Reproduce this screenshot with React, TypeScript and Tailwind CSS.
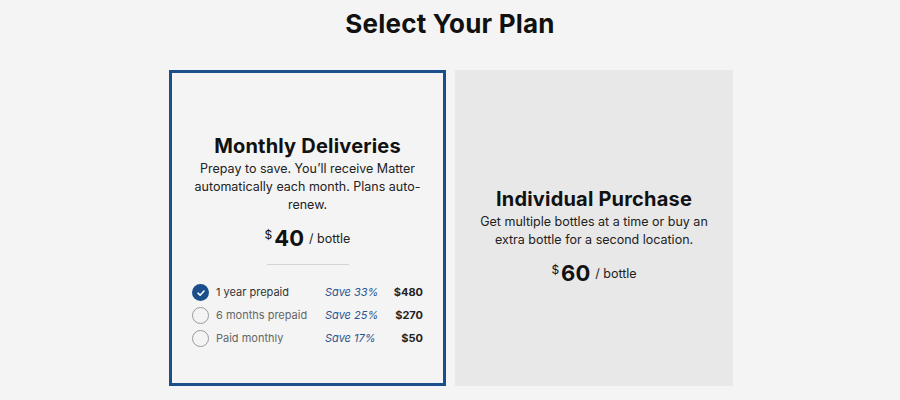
import React from "react";

const options = [
  { label: "1 year prepaid", save: "Save 33%", price: "$480", checked: true },
  { label: "6 months prepaid", save: "Save 25%", price: "$270", checked: false },
  { label: "Paid monthly", save: "Save 17%", price: "$50", checked: false },
];

function Radio({ checked }: { checked: boolean }) {
  if (checked) {
    return (
      <span className="flex h-[17px] w-[17px] shrink-0 items-center justify-center rounded-full bg-[#1b4f8c]">
        <svg width="10" height="10" viewBox="0 0 10 10" fill="none">
          <path d="M2 5.2 L4.1 7.2 L8 3" stroke="white" strokeWidth="1.6" strokeLinecap="round" strokeLinejoin="round" />
        </svg>
      </span>
    );
  }
  return <span className="h-[17px] w-[17px] shrink-0 rounded-full border border-[#9a9a9a] bg-[#f4f4f4]" />;
}

export default function App() {
  return (
    <div
      className="flex h-[400px] w-[900px] flex-col items-center bg-[#f4f4f4] text-[#111]"
      style={{ fontFamily: "Inter, 'Liberation Sans', sans-serif" }}
    >
      <h1 className="mt-[8px] text-[26px] font-bold leading-[32px] tracking-[0.2px]">Select Your Plan</h1>
      <div className="ml-[2px] mt-[30px] flex gap-[9px]">
        <div className="flex h-[316px] w-[277px] flex-col items-center justify-center border-[3px] border-[#1b4f8c] bg-[#f4f4f4] pt-[24px]">
          <h2 className="text-[20px] font-bold leading-[26px] tracking-[0.2px]">Monthly Deliveries</h2>
          <p className="mt-[1px] w-[240px] text-center text-[12.5px] leading-[18px] text-[#222]">
            Prepay to save. You’ll receive Matter automatically each month. Plans auto-renew.
          </p>
          <div className="mt-[12px] flex items-start">
            <span className="mt-[3px] text-[12px] leading-none">$</span>
            <span className="ml-[2px] text-[22px] font-bold leading-[24px]">40</span>
            <span className="ml-[5px] mt-[7px] text-[12.5px] leading-none text-[#222]">/ bottle</span>
          </div>
          <div className="mt-[14px] h-px w-[82px] bg-[#d4d4d4]" />
          <div className="mt-[19px] flex w-[231px] flex-col gap-[5px]">
            {options.map((o) => (
              <div key={o.label} className="flex h-[18px] items-center text-[11px] leading-none">
                <Radio checked={o.checked} />
                <span className={`ml-[7px] w-[109px] ${o.checked ? "text-[#333]" : "text-[#666]"}`}>{o.label}</span>
                <span className="text-[#2c5490] italic">{o.save}</span>
                <span className="ml-auto font-bold text-[#222]">{o.price}</span>
              </div>
            ))}
          </div>
        </div>
        <div className="flex h-[316px] w-[278px] flex-col items-center justify-center bg-[#e8e8e8] pt-[14px]">
          <h2 className="text-[20px] font-bold leading-[26px] tracking-[0.2px]">Individual Purchase</h2>
          <p className="mt-[1px] w-[240px] text-center text-[12.5px] leading-[18px] text-[#222]">
            Get multiple bottles at a time or buy an extra bottle for a second location.
          </p>
          <div className="mt-[12px] flex items-start">
            <span className="mt-[3px] text-[12px] leading-none">$</span>
            <span className="ml-[2px] text-[22px] font-bold leading-[24px]">60</span>
            <span className="ml-[5px] mt-[7px] text-[12.5px] leading-none text-[#222]">/ bottle</span>
          </div>
        </div>
      </div>
    </div>
  );
}
